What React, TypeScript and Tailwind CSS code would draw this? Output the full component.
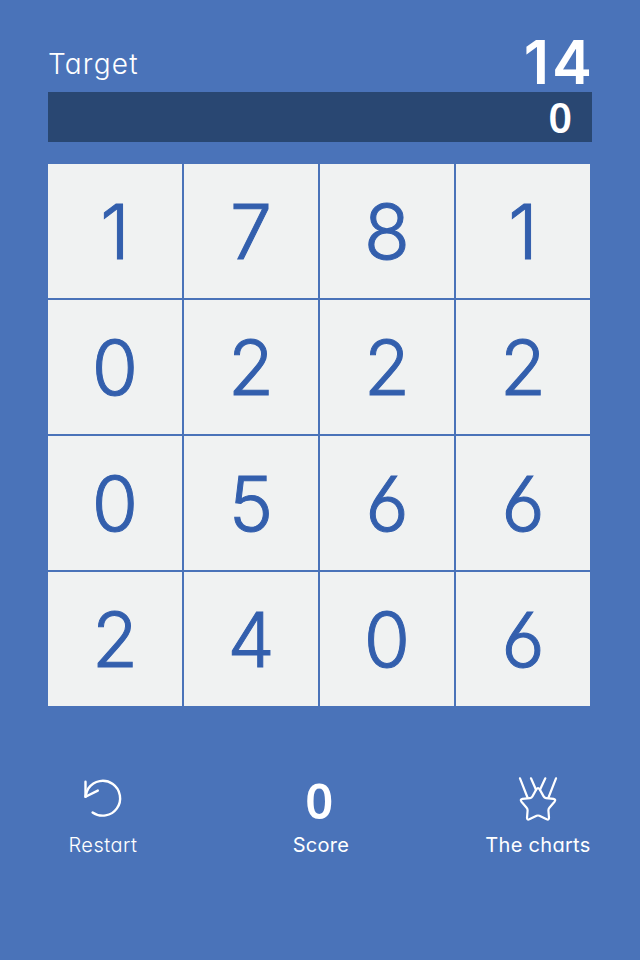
const rows = [
  [1, 7, 8, 1],
  [0, 2, 2, 2],
  [0, 5, 6, 6],
  [2, 4, 0, 6],
]

function RestartIcon() {
  return (
    <svg
      className="h-11 w-11"
      viewBox="0 0 44 44"
      fill="none"
      stroke="currentColor"
      strokeWidth="2.4"
      strokeLinecap="round"
      strokeLinejoin="round"
    >
      <path d="M11.6 35.4 A17.4 17.4 0 1 0 7.5 11.2 Q5.4 14.6 4.5 19.8" />
      <path d="M4.5 4.8 V19.8 L16.8 13.6" />
    </svg>
  )
}

function MedalIcon() {
  return (
    <svg
      className="h-11 w-11"
      viewBox="0 0 44 44"
      fill="none"
      stroke="currentColor"
      strokeWidth="2.2"
      strokeLinecap="round"
      strokeLinejoin="round"
    >
      <path d="M4 1.3 L11.5 20.5 M40 1.3 L32.5 20.5" />
      <path d="M15 1.3 L20 12.8 M29.3 1.3 L24 12.8" />
      <path d="M20.3 12.4 Q22 10 23.7 12.4 L27.6 19.4 Q28.4 20.9 30 21.1 L37.6 21.9 Q40.3 22.5 38.5 24.8 L33.4 30.7 Q32.3 32 32.4 33.5 L33 40.8 Q33 43.2 30.7 42.3 L23.4 38.8 Q22 38.2 20.6 38.8 L13.3 42.3 Q11 43.2 11 40.8 L11.6 33.5 Q11.7 32 10.6 30.7 L5.5 24.8 Q3.7 22.5 6.4 21.9 L14 21.1 Q15.6 20.9 16.4 19.4 Z" />
    </svg>
  )
}

export default function App() {
  return (
    <main className="h-[960px] w-[640px] overflow-hidden bg-[#4a73b9] px-12 font-['Inter','Lato',sans-serif] text-white [font-feature-settings:'cv11','cv03']">
      <header className="flex h-[92px] items-end justify-between">
        <h1 className="mb-2.5 text-[28px] leading-9 font-light tracking-[1.2px]">Target</h1>
        <span className="-mr-[3px] mb-[3px] text-[60px] leading-[53px] font-semibold tracking-[3px]">14</span>
      </header>

      <div className="flex h-[50px] items-center justify-end bg-[#294772] pr-5 font-['Noto_Sans',sans-serif] text-[41px] leading-none font-semibold">
        0
      </div>

      <section className="mt-[22px] grid w-[542px] grid-cols-4 gap-0.5">
        {rows.flat().map((n, i) => (
          <button
            key={i}
            className="flex h-[134px] items-center justify-center bg-[#f0f2f2] text-[75px] leading-none font-light text-[#335fad] [-webkit-text-stroke:1px_#335fad]"
          >
            {n}
          </button>
        ))}
      </section>

      <footer className="mt-[71px] flex justify-between pl-5 text-[20px] tracking-[0.3px]">
        <button className="flex w-[70px] flex-col items-center">
          <RestartIcon />
          <span className="mt-2.5 leading-7 font-light tracking-[0.5px] whitespace-nowrap">Restart</span>
        </button>
        <div className="ml-5 flex w-[60px] flex-col items-center">
          <span className="mr-[3px] flex h-[46px] items-center font-['Noto_Sans',sans-serif] text-[49px] leading-none font-semibold">
            0
          </span>
          <span className="mt-2 leading-7 whitespace-nowrap">Score</span>
        </div>
        <button className="flex w-[108px] flex-col items-center">
          <MedalIcon />
          <span className="mt-2.5 leading-7 whitespace-nowrap">The charts</span>
        </button>
      </footer>
    </main>
  )
}
